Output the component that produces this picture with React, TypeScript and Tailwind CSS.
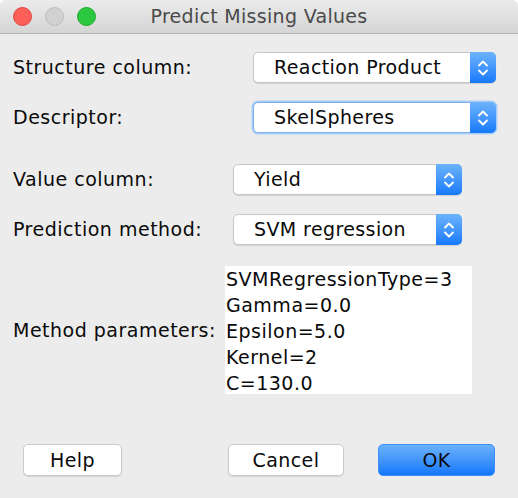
import React from "react";

const font = { fontFamily: '"DejaVu Sans", "Liberation Sans", sans-serif' };

const Arrows = () => (
  <svg width="12" height="20" viewBox="0 0 12 20" fill="none">
    <path d="M2 7.5 L6 3.5 L10 7.5" stroke="white" strokeWidth="1.8" strokeLinecap="round" strokeLinejoin="round" />
    <path d="M2 12.5 L6 16.5 L10 12.5" stroke="white" strokeWidth="1.8" strokeLinecap="round" strokeLinejoin="round" />
  </svg>
);

const Select = ({ value, width, focused }: { value: string; width: string; focused?: boolean }) => (
  <div
    className={`${width} h-[31px] flex rounded-[5px] bg-white border ${
      focused ? "border-[#7fb0ee] shadow-[0_0_0_1.5px_#a8cdf6]" : "border-[#c8c8c8] shadow-[0_1px_1px_rgba(0,0,0,0.12)]"
    }`}
  >
    <div className="flex-1 flex items-center pl-[20px] text-[19px] tracking-[0.4px] text-[#0a0a0a]">{value}</div>
    <div className="w-[26px] -my-px -mr-px flex items-center justify-center rounded-r-[5px] bg-gradient-to-b from-[#6bb3fb] to-[#1379fb]">
      <Arrows />
    </div>
  </div>
);

const Button = ({ label, width, primary }: { label: string; width: string; primary?: boolean }) => (
  <button
    className={`${width} h-[32px] rounded-[5px] text-[19px] tracking-[0.4px] text-[#0a0a0a] flex items-center justify-center ${
      primary
        ? "bg-gradient-to-b from-[#6ab1fb] to-[#0f77fb] border border-[#3e8ef5]"
        : "bg-white border border-[#cbcbcb] shadow-[0_1px_1px_rgba(0,0,0,0.1)]"
    }`}
  >
    {label}
  </button>
);

export default function App() {
  return (
    <div style={font} className="w-[518px] h-[498px] bg-[#ececec] overflow-hidden rounded-t-[6px] flex flex-col">
      <div className="h-[34px] shrink-0 flex items-center relative bg-gradient-to-b from-[#ebebeb] to-[#d5d5d5] border-b border-[#b4b4b4]">
        <div className="flex gap-[13px] pl-[13px]">
          <span className="w-[19px] h-[19px] rounded-full bg-[#fc5f57] border border-[#e0443e]" />
          <span className="w-[19px] h-[19px] rounded-full bg-[#d1d1d1] border border-[#bdbdbd]" />
          <span className="w-[19px] h-[19px] rounded-full bg-[#2bc840] border border-[#1aab29]" />
        </div>
        <div className="absolute inset-0 flex items-center justify-center text-[19px] tracking-[0.3px] text-[#4a4a4a]">
          Predict Missing Values
        </div>
      </div>

      <div className="pl-[13px] pr-[22px] text-[19px] tracking-[0.5px] text-[#0a0a0a]">
        <div className="flex items-center justify-between mt-[18px]">
          <span>Structure column:</span>
          <Select value="Reaction Product" width="w-[243px]" />
        </div>
        <div className="flex items-center justify-between mt-[19px]">
          <span>Descriptor:</span>
          <Select value="SkelSpheres" width="w-[243px]" focused />
        </div>
        <div className="flex items-center mt-[31px]">
          <span className="w-[220px]">Value column:</span>
          <Select value="Yield" width="w-[229px]" />
        </div>
        <div className="flex items-center mt-[19px]">
          <span className="w-[220px]">Prediction method:</span>
          <Select value="SVM regression" width="w-[229px]" />
        </div>
        <div className="flex items-center mt-[21px]">
          <span className="w-[212px]">Method parameters:</span>
          <div className="w-[247px] h-[128px] bg-white pl-[1px] text-[19px] leading-[26px] tracking-[0.5px]">
            <div>SVMRegressionType=3</div>
            <div>Gamma=0.0</div>
            <div>Epsilon=5.0</div>
            <div>Kernel=2</div>
            <div>C=130.0</div>
          </div>
        </div>
      </div>

      <div className="flex items-center mt-[50px] pl-[23px] pr-[23px]">
        <Button label="Help" width="w-[99px]" />
        <div className="flex-1" />
        <Button label="Cancel" width="w-[116px]" />
        <div className="w-[34px]" />
        <Button label="OK" width="w-[117px]" primary />
      </div>
    </div>
  );
}
